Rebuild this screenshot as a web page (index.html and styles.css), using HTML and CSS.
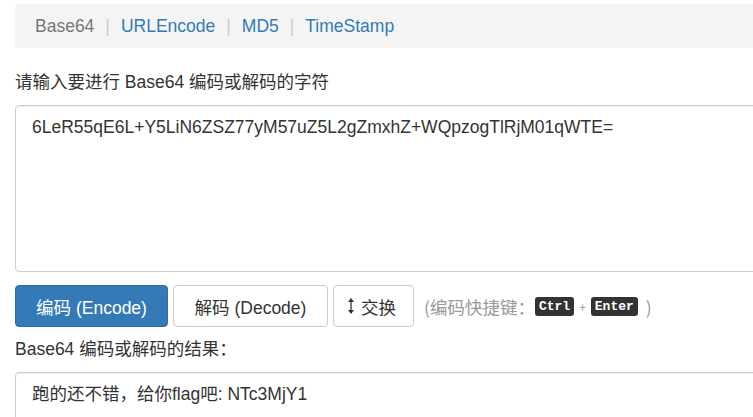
FILE: index.html
```html
<!DOCTYPE html>
<html lang="zh-CN">
<head>
<meta charset="utf-8">
<title>Base64</title>
<link rel="stylesheet" href="styles.css">
</head>
<body>
<div class="page">
  <nav class="crumbs">
    <span class="crumb active">Base64</span>
    <span class="sep">|</span>
    <a class="crumb" href="#">URLEncode</a>
    <span class="sep">|</span>
    <a class="crumb" href="#">MD5</a>
    <span class="sep">|</span>
    <a class="crumb" href="#">TimeStamp</a>
  </nav>

  <label class="field-label" for="src">请输入要进行 Base64 编码或解码的字符</label>
  <textarea id="src" class="box box-src">6LeR55qE6L+Y5LiN6ZSZ77yM57uZ5L2gZmxhZ+WQpzogTlRjM01qWTE=</textarea>

  <div class="actions">
    <button class="btn btn-primary">编码 (Encode)</button>
    <button class="btn btn-decode">解码 (Decode)</button>
    <button class="btn btn-swap"><svg class="swap-icon" width="8" height="18" viewBox="0 0 8 18"><path d="M4 3 V15" stroke="#333" stroke-width="1.3" fill="none"/><path d="M4 1 L7 5 H1 Z M4 17 L7 13 H1 Z" fill="#333"/></svg>交换</button>
    <span class="hint">(编码快捷键：<kbd>Ctrl</kbd><span class="plus">+</span><kbd>Enter</kbd><span class="close">)</span></span>
  </div>

  <label class="field-label result-label" for="dst">Base64 编码或解码的结果：</label>
  <textarea id="dst" class="box box-dst" readonly>跑的还不错，给你flag吧: NTc3MjY1</textarea>
</div>
</body>
</html>
```

FILE: styles.css
```css
html, body {
  margin: 0;
  padding: 0;
  background: #fff;
  overflow: hidden;
}

body {
  font-family: "Liberation Sans", Arial, "Noto Sans CJK SC", sans-serif;
  font-size: 17.5px;
  color: #333;
}

.page {
  width: 800px;
  padding: 4px 0 0 15px;
}

.crumbs {
  display: flex;
  align-items: center;
  height: 44px;
  padding: 0 20px;
  background: #f4f4f4;
  border-radius: 4px;
  margin-bottom: 22px;
  line-height: 24px;
}

.crumb {
  color: #337ab7;
  text-decoration: none;
}

.crumb.active {
  color: #777;
}

.sep {
  color: #ccc;
  padding: 0 11px;
}

.field-label {
  display: block;
  line-height: 24px;
  margin-bottom: 11px;
}

.box {
  display: block;
  box-sizing: border-box;
  width: 790px;
  margin: 0;
  padding: 9px 16px;
  font-family: "Liberation Sans", Arial, "Noto Sans CJK SC", sans-serif;
  font-size: 17.5px;
  line-height: 24px;
  color: #333;
  border: 1px solid #ccc;
  border-radius: 4px;
  box-shadow: inset 0 1px 1px rgba(0, 0, 0, 0.075);
  resize: none;
  overflow: hidden;
}

.box-src {
  height: 167px;
  margin-bottom: 13px;
}

.box-dst {
  height: 120px;
}

.actions {
  display: flex;
  align-items: center;
  gap: 5px;
  margin-bottom: 10px;
}

.btn {
  box-sizing: border-box;
  height: 42px;
  padding: 0 16px;
  font-family: "Liberation Sans", Arial, "Noto Sans CJK SC", sans-serif;
  font-size: 17.5px;
  color: #333;
  background: #fff;
  border: 1px solid #ccc;
  border-radius: 4px;
  display: inline-flex;
  align-items: center;
}

.btn-primary {
  width: 153px;
  justify-content: center;
  color: #fff;
  background: #337ab7;
  border-color: #2e6da4;
}

.btn-decode {
  width: 155px;
  justify-content: center;
}

.btn-swap {
  width: 81px;
  padding: 0 13px;
  gap: 6px;
}

.swap-icon {
  flex: none;
}

.hint {
  margin-left: 5px;
  color: #999;
  font-family: "Noto Sans CJK SC", "Liberation Sans", sans-serif;
  font-size: 17.5px;
  display: inline-flex;
  align-items: center;
}

kbd {
  display: inline-block;
  font-family: "Liberation Mono", "DejaVu Sans Mono", monospace;
  font-size: 13px;
  font-weight: bold;
  line-height: 19px;
  height: 19px;
  padding: 0 4px;
  color: #fff;
  background: #333;
  border-radius: 3px;
  margin-left: 0;
}

.plus {
  font-size: 12px;
  color: #999;
  margin: 0 5px;
}

.close {
  margin-left: 8px;
}

.result-label {
  margin-bottom: 11px;
}
```
